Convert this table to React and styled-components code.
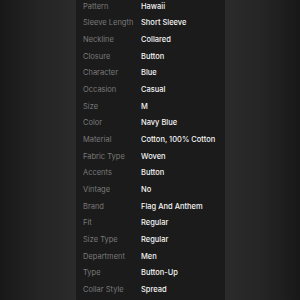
import React from 'react';
import styled, { createGlobalStyle } from 'styled-components';

const GlobalStyle = createGlobalStyle`
  html, body {
    margin: 0;
    padding: 0;
    background: #1c1c1c;
  }
  #root {
    width: 300px;
    height: 300px;
    overflow: hidden;
  }
`;

const StyledPage = styled.div`
  display: grid;
  grid-template-columns: 76px 149px 75px;
  width: 300px;
  height: 300px;
  overflow: hidden;
`;

const StyledSide = styled.div`
  background: ${({ right }) =>
    right
      ? 'linear-gradient(to right, #2b2b2b 0%, #252525 50%, #181818 100%)'
      : 'linear-gradient(to right, #181818 0%, #242424 50%, #2b2b2b 100%)'};
`;

const StyledPanel = styled.div`
  background: #1b1b1b;
  padding: 0 0 0 7px;
  overflow: hidden;
`;

const StyledList = styled.dl`
  margin: -2px 0 0 0;
  display: grid;
  grid-template-columns: 58px 1fr;
  grid-auto-rows: 16.67px;
  align-items: center;
  font-family: Inter, 'Liberation Sans', sans-serif;
  font-size: 7.5px;
`;

const StyledLabel = styled.dt`
  margin: 0;
  color: #7a7a7a;
  white-space: nowrap;
`;

const StyledValue = styled.dd`
  margin: 0;
  color: #f4f4f4;
  font-weight: 500;
  white-space: nowrap;
`;

const specs = [
  ['Pattern', 'Hawaii'],
  ['Sleeve Length', 'Short Sleeve'],
  ['Neckline', 'Collared'],
  ['Closure', 'Button'],
  ['Character', 'Blue'],
  ['Occasion', 'Casual'],
  ['Size', 'M'],
  ['Color', 'Navy Blue'],
  ['Material', 'Cotton, 100% Cotton'],
  ['Fabric Type', 'Woven'],
  ['Accents', 'Button'],
  ['Vintage', 'No'],
  ['Brand', 'Flag And Anthem'],
  ['Fit', 'Regular'],
  ['Size Type', 'Regular'],
  ['Department', 'Men'],
  ['Type', 'Button-Up'],
  ['Collar Style', 'Spread'],
];

const App = () => (
  <>
    <GlobalStyle />
    <StyledPage>
      <StyledSide />
      <StyledPanel>
        <StyledList>
          {specs.map(([label, value]) => (
            <React.Fragment key={label}>
              <StyledLabel>{label}</StyledLabel>
              <StyledValue>{value}</StyledValue>
            </React.Fragment>
          ))}
        </StyledList>
      </StyledPanel>
      <StyledSide right />
    </StyledPage>
  </>
);

export default App;
